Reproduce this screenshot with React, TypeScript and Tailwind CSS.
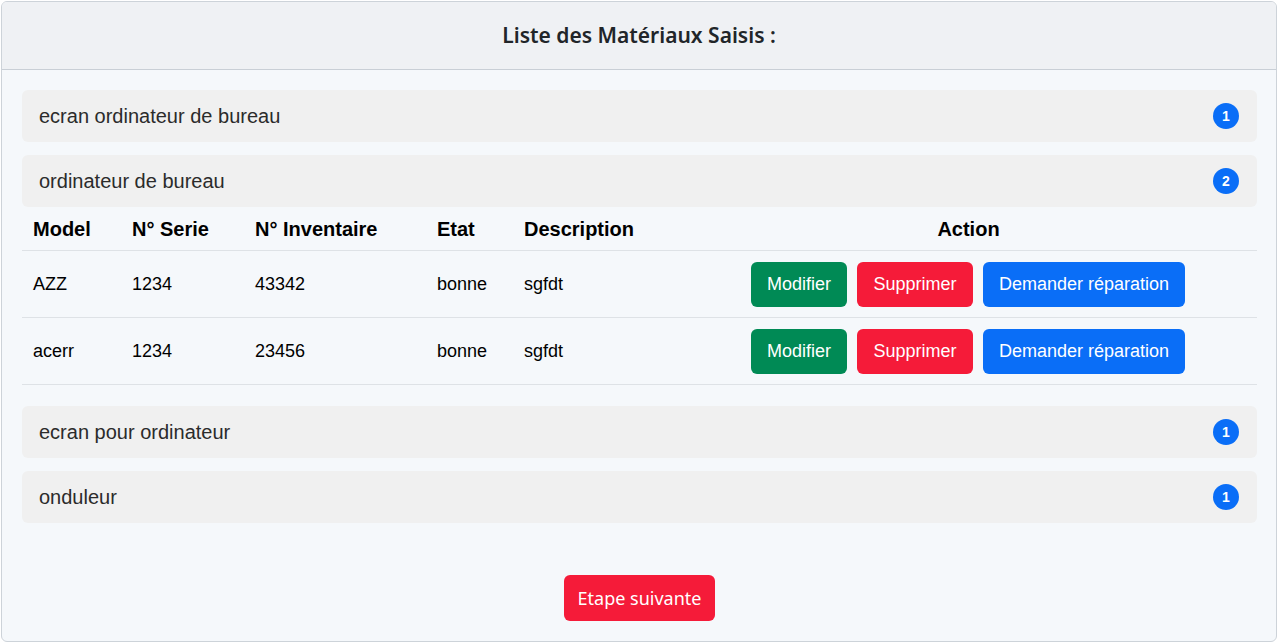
const groups = [
  { name: 'ecran ordinateur de bureau', count: 1, open: false },
  { name: 'ordinateur de bureau', count: 2, open: true },
  { name: 'ecran pour ordinateur', count: 1, open: false },
  { name: 'onduleur', count: 1, open: false },
];

const rows = [
  { model: 'AZZ', serie: '1234', inventaire: '43342', etat: 'bonne', description: 'sgfdt' },
  { model: 'acerr', serie: '1234', inventaire: '23456', etat: 'bonne', description: 'sgfdt' },
];

const cols = 'grid grid-cols-[99px_123px_182px_87px_167px_1fr]';

const MaterielTable = () => {
  return (
    <div className="text-black">
      <div className={`${cols} h-[44px] items-center border-b border-[#dee2e6] text-[20px] font-bold`}>
        <div className="pl-[11px]">Model</div>
        <div className="pl-[11px]">N° Serie</div>
        <div className="pl-[11px]">N° Inventaire</div>
        <div className="pl-[11px]">Etat</div>
        <div className="pl-[11px]">Description</div>
        <div className="text-center">Action</div>
      </div>
      {rows.map((r) => (
        <div key={r.inventaire} className={`${cols} h-[67px] items-center border-b border-[#dee2e6] text-[18px]`}>
          <div className="pl-[11px]">{r.model}</div>
          <div className="pl-[11px]">{r.serie}</div>
          <div className="pl-[11px]">{r.inventaire}</div>
          <div className="pl-[11px]">{r.etat}</div>
          <div className="pl-[11px]">{r.description}</div>
          <div className="flex justify-center gap-[10px] pr-px">
            <button className="h-[45px] w-[96px] rounded-md bg-[#008a55] text-white">Modifier</button>
            <button className="h-[45px] w-[116px] rounded-md bg-[#f51b39] text-white">Supprimer</button>
            <button className="h-[45px] w-[202px] rounded-md bg-[#0a6ef7] text-white">Demander réparation</button>
          </div>
        </div>
      ))}
    </div>
  );
};

const App = () => {
  return (
    <div className="p-px bg-white" style={{ fontFamily: '"Liberation Sans", Arial, sans-serif' }}>
      <div className="h-[641px] rounded-md border border-[#cdd3d9] bg-[#f5f8fb] overflow-hidden flex flex-col">
        <div className="h-[68px] shrink-0 bg-[#eff1f4] border-b border-[#c9cfd6] flex items-center justify-center">
          <h1 className="text-[21px] font-semibold text-[#212529]" style={{ fontFamily: '"Noto Sans", "Open Sans", sans-serif' }}>
            Liste des Matériaux Saisis :
          </h1>
        </div>

        <div className="pl-[20px] pr-[19px] pt-[20px] flex flex-col">
          {groups.map((g, i) => (
            <div key={g.name} className={i === 2 ? 'mt-[21px]' : i === 0 ? '' : 'mt-[13px]'}>
              <div className="h-[52px] rounded-md bg-[#f0f0f0] flex items-center justify-between pl-[17px] pr-[18px]">
                <span className="text-[20px] text-[#2b2b2b]">{g.name}</span>
                <span className="w-[26px] h-[26px] rounded-full bg-[#0a6ef7] text-white text-[14px] font-bold flex items-center justify-center">
                  {g.count}
                </span>
              </div>
              {g.open && <MaterielTable />}
            </div>
          ))}

          <div className="flex justify-center mt-[52px]">
            <button
              className="h-[46px] w-[151px] rounded-md bg-[#f51b39] text-white text-[18px]"
              style={{ fontFamily: '"Noto Sans", "Open Sans", sans-serif' }}
            >
              Etape suivante
            </button>
          </div>
        </div>
      </div>
    </div>
  );
};

export default App;
